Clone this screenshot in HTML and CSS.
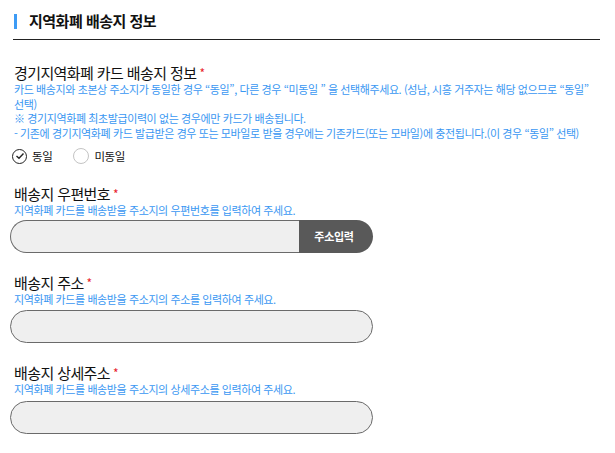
FILE: index.html
```html
<!doctype html>
<html lang="ko">
<head>
    <meta charset="utf-8">
    <title>지역화폐 배송지 정보</title>
    <link rel="stylesheet" href="styles.css">
</head>
<body>
    <h2 class="page-title">지역화폐 배송지 정보</h2>

    <div class="form">
        <div class="field">
            <p class="label">경기지역화폐 카드 배송지 정보<span class="req">*</span></p>
            <p class="desc">카드 배송지와 초본상 주소지가 동일한 경우 “동일”, 다른 경우 “미동일 ” 을 선택해주세요. (성남, 시흥 거주자는 해당 없으므로 “동일” 선택)</p>
            <p class="desc">※ 경기지역화폐 최초발급이력이 없는 경우에만 카드가 배송됩니다.</p>
            <p class="desc">- 기존에 경기지역화폐 카드 발급받은 경우 또는 모바일로 받을 경우에는 기존카드(또는 모바일)에 충전됩니다.(이 경우 “동일” 선택)</p>
            <div class="radios">
                <label class="radio checked">
                    <span class="circle">
                        <svg width="10" height="8" viewBox="0 0 10 8"><path d="M1.5 4 L4 6.3 L8.5 1.6" fill="none" stroke="#222" stroke-width="1.4"/></svg>
                    </span>동일
                </label>
                <label class="radio">
                    <span class="circle"></span>미동일
                </label>
            </div>
        </div>

        <div class="field">
            <p class="label">배송지 우편번호<span class="req">*</span></p>
            <p class="desc">지역화폐 카드를 배송받을 주소지의 우편번호를 입력하여 주세요.</p>
            <div class="input-row">
                <input class="input" type="text">
                <button class="addr-btn" type="button">주소입력</button>
            </div>
        </div>

        <div class="field">
            <p class="label">배송지 주소<span class="req">*</span></p>
            <p class="desc">지역화폐 카드를 배송받을 주소지의 주소를 입력하여 주세요.</p>
            <input class="input full" type="text">
        </div>

        <div class="field">
            <p class="label">배송지 상세주소<span class="req">*</span></p>
            <p class="desc">지역화폐 카드를 배송받을 주소지의 상세주소를 입력하여 주세요.</p>
            <input class="input full" type="text">
        </div>
    </div>
</body>
</html>
```

FILE: styles.css
```css
body {
    margin: 0;
    padding: 0 15px 0 10px;
    font-family: "Noto Sans CJK KR", "Noto Sans", sans-serif;
    color: #111;
    background: #fff;
}
p { margin: 0; }

.page-title {
    margin: 0 0 0 3px;
    padding: 11px 0 8px 16px;
    border-bottom: 1px solid #222;
    position: relative;
    font-size: 15px;
    font-weight: bold;
    line-height: 20px;
    letter-spacing: -0.5px;
}
.page-title::before {
    content: '';
    position: absolute;
    left: 1px; top: 14px;
    width: 3px; height: 15px;
    background: #3d9bf5;
}

.form { padding-top: 23px; }
.field { margin-bottom: 20px; }

.label {
    padding-left: 4px;
    font-size: 15px;
    line-height: 19px;
    letter-spacing: -0.6px;
}
.req {
    color: #e8222c;
    font-size: 12px;
    margin-left: 3px;
    vertical-align: 1px;
}
.desc {
    padding-left: 4px;
    font-size: 11px;
    line-height: 14.5px;
    color: #3a97f2;
    letter-spacing: -0.4px;
}

.radios {
    display: flex;
    gap: 21px;
    margin: 8px 0 1px;
    padding-left: 2px;
}
.radio {
    display: flex;
    align-items: center;
    gap: 5px;
    font-size: 11.5px;
    letter-spacing: -0.4px;
}
.radio .circle {
    width: 14px; height: 14px;
    border: 1px solid #c4c4c4;
    border-radius: 50%;
    display: flex;
    align-items: center;
    justify-content: center;
}
.radio.checked .circle { border: 1.5px solid #222; width: 13px; height: 13px; }

.input-row {
    display: flex;
    width: 363px;
    margin-top: 2px;
}
.input {
    box-sizing: border-box;
    height: 33px;
    border: 1px solid #6a6a6a;
    border-radius: 17px;
    background: #efefef;
    font: inherit;
    outline: none;
}
.input-row .input {
    flex: 1;
    min-width: 0;
    border-right: 0;
    border-radius: 17px 0 0 17px;
}
.input.full {
    display: block;
    width: 363px;
    margin-top: 4px;
}
.addr-btn {
    width: 74px;
    height: 33px;
    border: 0;
    border-radius: 0 17px 17px 0;
    background: #595959;
    color: #fff;
    font: inherit;
    font-size: 11px;
    font-weight: bold;
    letter-spacing: -0.3px;
    padding: 0 4px 0 0;
}
```
